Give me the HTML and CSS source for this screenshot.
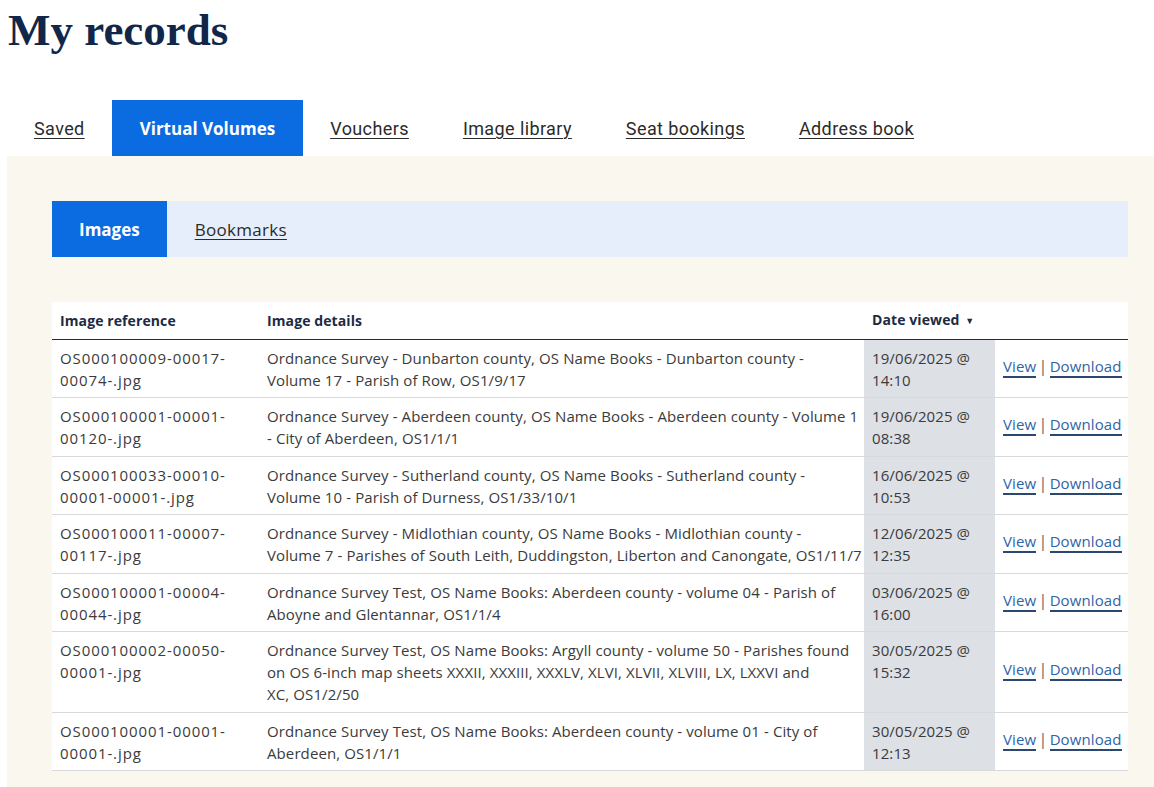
FILE: index.html
```html
<!DOCTYPE html>
<html lang="en">
<head>
<meta charset="utf-8">
<title>My records</title>
<link rel="stylesheet" href="styles.css">
</head>
<body>
<h1 class="title">My records</h1>
<nav class="tabs">
  <a class="tab" href="#">Saved</a>
  <a class="tab active" href="#">Virtual Volumes</a>
  <a class="tab" href="#">Vouchers</a>
  <a class="tab" href="#">Image library</a>
  <a class="tab" href="#">Seat bookings</a>
  <a class="tab" href="#">Address book</a>
</nav>
<section class="panel">
  <nav class="subtabs">
    <a class="subtab active" href="#">Images</a>
    <a class="subtab" href="#">Bookmarks</a>
  </nav>
  <table class="records">
    <colgroup>
      <col class="c-ref"><col class="c-det"><col class="c-date"><col class="c-act">
    </colgroup>
    <thead>
      <tr><th>Image reference</th><th>Image details</th><th>Date viewed <span class="caret">&#9660;</span></th><th></th></tr>
    </thead>
    <tbody>
      <tr><td class="ref">OS000100009-00017-00074-.jpg</td><td class="det">Ordnance Survey - Dunbarton county, OS Name Books - Dunbarton county - Volume&nbsp;17 - Parish of Row, OS1/9/17</td><td class="date">19/06/2025 @ 14:10</td><td class="act"><a href="#">View</a><span class="sep">|</span><a href="#">Download</a></td></tr>
      <tr><td class="ref">OS000100001-00001-00120-.jpg</td><td class="det">Ordnance Survey - Aberdeen county, OS Name Books - Aberdeen county - Volume 1 - City of Aberdeen, OS1/1/1</td><td class="date">19/06/2025 @ 08:38</td><td class="act"><a href="#">View</a><span class="sep">|</span><a href="#">Download</a></td></tr>
      <tr><td class="ref">OS000100033-00010-00001-00001-.jpg</td><td class="det">Ordnance Survey - Sutherland county, OS Name Books - Sutherland county - Volume 10 - Parish of Durness, OS1/33/10/1</td><td class="date">16/06/2025 @ 10:53</td><td class="act"><a href="#">View</a><span class="sep">|</span><a href="#">Download</a></td></tr>
      <tr><td class="ref">OS000100011-00007-00117-.jpg</td><td class="det">Ordnance Survey - Midlothian county, OS Name Books - Midlothian county - Volume&nbsp;7 - Parishes of South Leith, Duddingston, Liberton and Canongate, OS1/11/7</td><td class="date">12/06/2025 @ 12:35</td><td class="act"><a href="#">View</a><span class="sep">|</span><a href="#">Download</a></td></tr>
      <tr><td class="ref">OS000100001-00004-00044-.jpg</td><td class="det">Ordnance Survey Test, OS Name Books: Aberdeen county - volume 04 - Parish of Aboyne and Glentannar, OS1/1/4</td><td class="date">03/06/2025 @ 16:00</td><td class="act"><a href="#">View</a><span class="sep">|</span><a href="#">Download</a></td></tr>
      <tr><td class="ref">OS000100002-00050-00001-.jpg</td><td class="det">Ordnance Survey Test, OS Name Books: Argyll county - volume 50 - Parishes found on OS 6-inch map sheets XXXII, XXXIII, XXXLV, XLVI, XLVII, XLVIII, LX, LXXVI and XC,&nbsp;OS1/2/50</td><td class="date">30/05/2025 @ 15:32</td><td class="act"><a href="#">View</a><span class="sep">|</span><a href="#">Download</a></td></tr>
      <tr><td class="ref">OS000100001-00001-00001-.jpg</td><td class="det">Ordnance Survey Test, OS Name Books: Aberdeen county - volume 01 - City of Aberdeen, OS1/1/1</td><td class="date">30/05/2025 @ 12:13</td><td class="act"><a href="#">View</a><span class="sep">|</span><a href="#">Download</a></td></tr>
    </tbody>
  </table>
</section>
</body>
</html>
```
FILE: styles.css
```css
html, body {
  margin: 0;
  padding: 0;
  background: #ffffff;
}
body {
  padding-left: 7px;
  font-family: "Open Sans", "Liberation Sans", sans-serif;
  color: #3b3b3b;
}
.title {
  margin: 0;
  padding: 4px 0 0 1px;
  font-family: "Liberation Serif", serif;
  font-weight: 700;
  font-size: 45px;
  line-height: 52px;
  color: #10274a;
}
.tabs {
  display: flex;
  margin-top: 44px;
  height: 56px;
}
.tab {
  display: flex;
  align-items: center;
  padding: 0 27px;
  font-family: Roboto, "Open Sans", sans-serif;
  font-size: 18px;
  letter-spacing: 0.4px;
  color: #2b2b2b;
  text-decoration: underline;
  text-underline-offset: 3px;
  text-decoration-thickness: 1px;
}
.tab.active {
  background: #0b6be0;
  color: #ffffff;
  text-decoration: none;
  font-weight: 700;
  font-family: "Open Sans", sans-serif;
  font-size: 17px;
  letter-spacing: 0;
  padding: 0 28px;
}
.panel {
  background: #f9f7ee;
  padding: 45px 26px 17px 45px;
}
.subtabs {
  display: flex;
  height: 56px;
  background: #e5eefa;
}
.subtab {
  display: flex;
  align-items: center;
  padding: 0 28px;
  font-size: 17px;
  letter-spacing: 0.3px;
  color: #2b2b2b;
  text-decoration: underline;
  text-underline-offset: 3px;
}
.subtab.active {
  background: #0b6be0;
  color: #ffffff;
  font-weight: 700;
  text-decoration: none;
  letter-spacing: 0;
  padding: 0 27px;
}
.records {
  margin-top: 45px;
  width: 100%;
  background: #ffffff;
  border-collapse: collapse;
  table-layout: fixed;
  font-size: 15px;
  letter-spacing: 0.1px;
  line-height: 22px;
}
.c-ref { width: 207px; }
.c-det { width: 605px; }
.c-date { width: 131px; }
.c-act { width: 133px; }
.records th {
  text-align: left;
  font-size: 14px;
  font-weight: 700;
  color: #1c2b44;
  padding: 7px 8px 6.5px;
  border-bottom: 1.5px solid #2a2a2a;
}
.caret {
  font-size: 9px;
  vertical-align: 1px;
  margin-left: 2px;
}
.records td {
  padding: 7px 8px 6.5px;
  vertical-align: top;
  border-bottom: 1px solid #d9d9d9;
}
.records td.det {
  padding-right: 2px;
}
.records td.ref {
  letter-spacing: 0.9px;
}
.records td.date {
  background: #dde0e5;
}
.records td.act {
  vertical-align: middle;
  white-space: nowrap;
  padding-top: 3px;
  padding-bottom: 8px;
}
.act a {
  color: #2f64a8;
  text-decoration: none;
  border-bottom: 2px solid #2b4870;
  padding-bottom: 0;
}
.sep {
  color: #6f6f6f;
  margin: 0 2px;
  font-size: 17px;
}
```
